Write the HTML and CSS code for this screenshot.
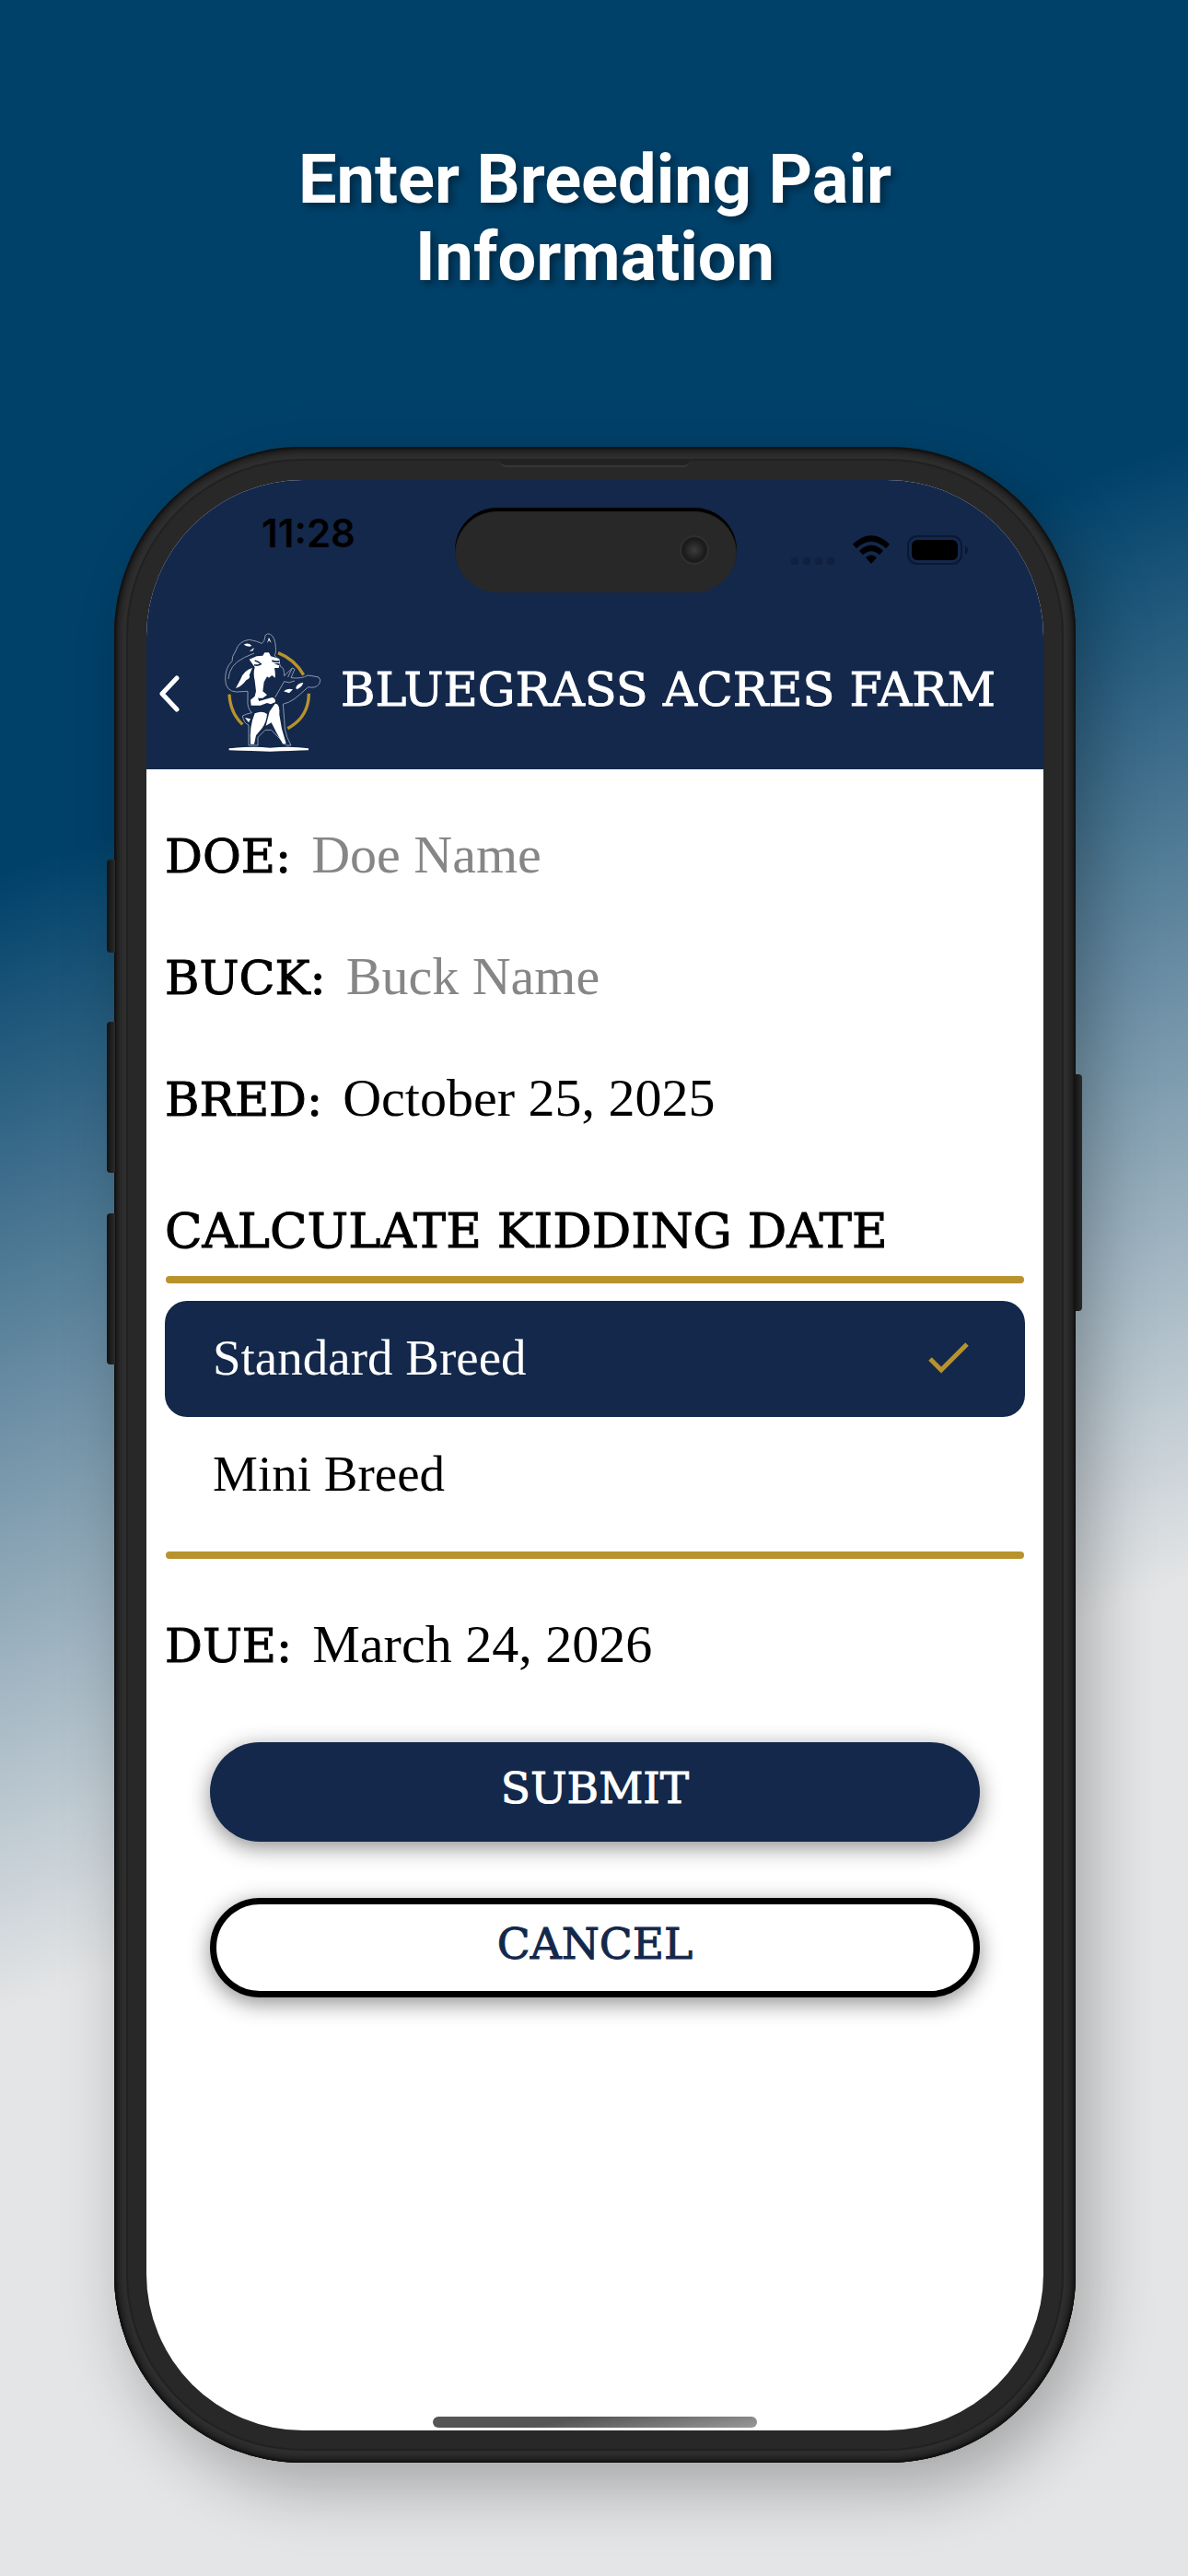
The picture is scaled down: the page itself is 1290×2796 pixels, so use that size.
FILE: index.html
```html
<!DOCTYPE html>
<html lang="en">
<head>
<meta charset="utf-8">
<meta name="viewport" content="width=device-width, initial-scale=1">
<title>Bluegrass Acres Farm</title>
<link rel="stylesheet" href="styles.css">
</head>
<body>
<h1 class="headline">Enter Breeding Pair Information</h1>
<div class="phone">
  <span class="side-key side-key-action"></span>
  <span class="side-key side-key-up"></span>
  <span class="side-key side-key-down"></span>
  <span class="side-key side-key-power"></span>
  <span class="speaker"></span>
  <main class="screen">
    <header class="app-header">
      <div class="status">
        <time class="clock">11:28</time>
        <div class="island"><span class="camera"></span></div>
        <div class="indicators">
          <svg class="cell" width="48" height="10" viewBox="0 0 48 10" aria-hidden="true"><g fill="#10203f"><rect x="0" y="1" width="8" height="8" rx="3"/><rect x="13" y="1" width="8" height="8" rx="3"/><rect x="26" y="1" width="8" height="8" rx="3"/><rect x="39" y="1" width="8" height="8" rx="3"/></g></svg>
          <svg class="wifi" width="42" height="32" viewBox="0 0 42 32" aria-hidden="true"><g fill="none" stroke="#000" stroke-width="6"><path d="M3 12Q21-5 39 12"/><path d="M10 19Q21 9 32 19"/></g><path d="M15 24Q21 19 27 24L21 31Z"/></svg>
          <svg class="battery" width="68" height="32" viewBox="0 0 68 32" aria-hidden="true"><rect x="1" y="1" width="58" height="30" rx="10" fill="none" stroke="#0b1832" stroke-width="2"/><rect x="5" y="5" width="50" height="22" rx="6"/><path d="M63 11Q69 16 63 21Z" fill="#0b1832"/></svg>
        </div>
      </div>
      <div class="brand">
        <a class="back" href="#" aria-label="Back"><svg width="24" height="40" viewBox="0 0 24 40" aria-hidden="true"><path d="M20 3L4 20L20 37" fill="none" stroke="#fff" stroke-width="5" stroke-linecap="round" stroke-linejoin="round"/></svg></a>
        <svg class="logo" width="112" height="132" viewBox="0 0 336 396" aria-hidden="true">
          <g fill="none" stroke="#b8922d" stroke-width="10"><path d="M186 65Q240 86 269 137"/><path d="M27 200Q30 260 70 298"/><path d="M286 197Q286 274 217 311"/></g>
          <g fill="#13284b" stroke="#8d99af" stroke-width="3" stroke-linejoin="round">
            <path d="M87 190L50 192Q14 190 14 150Q14 112 36 92Q34 78 48 58Q58 26 92 22Q120 27 132 34Q142 30 144 8Q150 0 160 4Q176 12 178 46Q180 68 174 72Q190 86 194 110Q206 110 206 140L232 114L240 118L228 146Q264 150 282 138Q300 140 318 144Q328 152 320 166Q308 182 284 176Q258 200 240 214Q220 228 202 232L206 280L208 312Q214 344 228 366H212L164 316H144L120 340V366H90V300Q74 294 70 270Q80 264 100 260Q84 244 87 216Z"/>
            <path d="M24 150Q26 104 76 80L108 66" fill="none"/>
            <path d="M176 210L206 158M232 114L218 144M206 158Q220 166 240 156" fill="none"/>
          </g>
          <g fill="#fff">
            <path d="M92 86L116 76L136 74L142 64H156L162 76L190 84L192 98L172 100L190 106L188 114L174 114Q178 134 176 146L166 138L156 146L150 142L140 160L136 190L150 202L136 212H120L124 222L166 210Q180 214 176 226L162 232L150 228L128 236H98L96 218L110 206L114 190L110 156Q104 132 110 112Z"/>
            <path d="M102 114Q74 122 64 150L48 180Q68 174 82 154Q98 146 92 138Z"/>
            <path d="M110 262Q134 252 150 264Q148 290 134 310L114 334L108 362H96Q92 304 110 262Z"/>
            <path d="M176 230Q192 228 190 266L198 312L212 360L202 362Q180 326 164 292L146 302L158 256Z"/>
            <path d="M78 276L96 280L90 292ZM204 190Q216 178 234 184L222 196ZM244 178Q248 164 268 162Q264 178 246 184ZM74 38Q90 30 100 42Q90 48 74 38ZM92 60L108 48L104 58ZM150 34L156 14L164 32L156 24Z"/>
            <path d="M26 376Q100 368 160 374Q230 368 285 376V382Q230 384 160 386Q90 384 26 382Z"/>
          </g>
          <g fill="none" stroke="#13284b" stroke-width="5"><path d="M110 90Q122 92 130 102M166 90Q176 96 190 92M108 104Q120 108 132 100"/></g>
        </svg>
        <span class="brand-name">BLUEGRASS ACRES FARM</span>
      </div>
    </header>
    <form class="form">
      <div class="field"><label class="label" for="doe">DOE:</label><input class="value" id="doe" type="text" placeholder="Doe Name"></div>
      <div class="field"><label class="label" for="buck">BUCK:</label><input class="value" id="buck" type="text" placeholder="Buck Name"></div>
      <div class="field"><label class="label" for="bred">BRED:</label><input class="value" id="bred" type="text" value="October 25, 2025"></div>
      <fieldset class="breeds">
        <legend class="label legend">CALCULATE KIDDING DATE</legend>
        <div class="options">
          <label class="option"><input class="radio" type="radio" name="breed" checked><span>Standard Breed</span><svg class="check" width="46" height="36" viewBox="0 0 46 36" aria-hidden="true"><path d="M3 19L15 31L43 3" fill="none" stroke="#b8922d" stroke-width="5"/></svg></label>
          <label class="option"><input class="radio" type="radio" name="breed"><span>Mini Breed</span><svg class="check" width="46" height="36" viewBox="0 0 46 36" aria-hidden="true"><path d="M3 19L15 31L43 3" fill="none" stroke="#b8922d" stroke-width="5"/></svg></label>
        </div>
      </fieldset>
      <div class="field"><span class="label">DUE:</span><output class="value">March 24, 2026</output></div>
      <div class="actions">
        <button class="button button-primary" type="submit">SUBMIT</button>
        <button class="button button-outline" type="button">CANCEL</button>
      </div>
    </form>
    <span class="home-bar"></span>
  </main>
</div>
</body>
</html>
```
FILE: styles.css
```css
*, *::before, *::after { box-sizing: border-box; }

:root {
  --navy: #13284b;
  --gold: #b8922d;
  --bezel: #282828;
}

body {
  margin: 0;
  min-height: 100vh;
  padding: 153px 122px 123px 124px;
  display: flex;
  flex-direction: column;
  background: linear-gradient(160deg, #00416a 29%, #e4e5e6 67%);
  font-family: "Liberation Serif", serif;
  color: #000;
}

.headline {
  margin: 0 auto 164px;
  max-width: 700px;
  font: 700 74px/84px Roboto, sans-serif;
  text-align: center;
  color: #fff;
  text-shadow: 4px 4px 8px rgba(0, 0, 0, .4);
}

/* Device */
.phone {
  position: relative;
  flex: 1;
  display: flex;
  padding: 36px 35px 35px;
  border-radius: 204px;
  background: var(--bezel);
  box-shadow: inset 0 0 2px 2px #111, inset 0 0 8px 5px #181818, inset 0 0 0 13px #303030,
    inset 0 0 0 15px #222, 16px 28px 70px rgba(0, 0, 0, .28);
}

.side-key {
  position: absolute;
  left: -8px;
  width: 9px;
  border-radius: 4px 0 0 4px;
  background: linear-gradient(90deg, #111, #2b2b2b);
}
.side-key-action { top: 448px; height: 101px; }
.side-key-up { top: 624px; height: 164px; }
.side-key-down { top: 832px; height: 164px; }
.side-key-power {
  top: 681px;
  left: auto;
  right: -7px;
  height: 257px;
  border-radius: 0 4px 4px 0;
}

.speaker {
  position: absolute;
  top: 14px;
  left: 50%;
  width: 208px;
  height: 8px;
  margin-left: -104px;
  border-radius: 0 0 8px 8px;
  border-bottom: 2px solid #363636;
  background: #222;
}

.screen {
  flex: 1;
  display: flex;
  flex-direction: column;
  overflow: hidden;
  border-radius: 170px;
  background: #fff;
}

/* Header */
.app-header {
  background: var(--navy);
  padding: 30px 48px 16px 13px;
}

.status {
  display: grid;
  grid-template-columns: 1fr 306px 1fr;
}
.clock {
  padding: 4px 0 0 112px;
  font: 600 42px/48px Inter, sans-serif;
}
.island {
  height: 92px;
  margin-left: 18px;
  margin-right: -18px;
  padding-right: 30px;
  display: flex;
  align-items: center;
  justify-content: flex-end;
  border-radius: 46px;
  background: var(--bezel);
  box-shadow: inset 0 4px 1px #000;
}
.camera {
  width: 32px;
  height: 32px;
  border-radius: 50%;
  border: 2px solid #303030;
  background: radial-gradient(#3c3c3c, #1b1b1b 60%, #222);
}
.indicators {
  display: flex;
  align-items: center;
  justify-content: flex-end;
  gap: 18px;
  padding-right: 32px;
}
.cell { margin-top: 24px; }

.brand {
  display: flex;
  align-items: center;
  margin-top: 44px;
}
.back { display: flex; margin-right: 44px; }
.logo { flex: none; margin-right: 10px; }
.brand-name {
  flex: 1;
  font: 51px/56px "DejaVu Serif", serif;
  -webkit-text-stroke: 1px currentColor;
  white-space: nowrap;
  padding-bottom: 8px;
  padding-left: 8px;
  color: #fff;
}

/* Form */
.form { padding: 60px 20px 0; }
.field {
  display: flex;
  align-items: baseline;
  gap: 22px;
  height: 66px;
  margin-bottom: 66px;
}
.label {
  font: 51px/66px "DejaVu Serif", serif;
  -webkit-text-stroke: 1px currentColor;
}
.value {
  flex: 1;
  min-width: 0;
  padding: 0;
  border: 0;
  outline: 0;
  background: none;
  font: 58px/66px "Liberation Serif", serif;
  color: inherit;
}
.value::placeholder { color: #868686; opacity: 1; }

.breeds { margin: 78px 0 60px; padding: 0; border: 0; min-width: 0; }
.breeds .legend {
  padding: 0 0 16px;
  font-size: 53px;
}
.options {
  padding: 27px 0 28px;
  position: relative;
}
.options::before,
.options::after {
  content: "";
  position: absolute;
  left: 1px;
  right: 1px;
  height: 8px;
  border-radius: 4px;
  background: var(--gold);
}
.options::before { top: 0; }
.options::after { bottom: 0; }
.option {
  display: flex;
  align-items: center;
  justify-content: space-between;
  height: 126px;
  padding: 0 60px 2px 52px;
  border-radius: 24px;
  font-size: 55px;
  line-height: 64px;
}
.radio {
  position: absolute;
  opacity: 0;
}
.check { visibility: hidden; }
.option:has(:checked) { background: var(--navy); color: #fff; }
.option:has(:checked) .check { visibility: visible; }

.actions {
  display: flex;
  flex-direction: column;
  gap: 61px;
  padding: 7px 49px 0;
}
.button {
  height: 108px;
  padding: 0 0 8px;
  border: 0;
  border-radius: 54px;
  font: 47px/56px "DejaVu Serif", serif;
  -webkit-text-stroke: 1px currentColor;
  box-shadow: 0 6px 24px rgba(0, 0, 0, .45);
}
.button-primary { background: var(--navy); color: #fff; }
.button-outline {
  border: 7px solid #000;
  background: #fff;
  color: var(--navy);
}

.home-bar {
  width: 352px;
  height: 12px;
  margin: auto auto 3px;
  border-radius: 6px;
  background: linear-gradient(170deg, #555 40%, #999);
}
```
